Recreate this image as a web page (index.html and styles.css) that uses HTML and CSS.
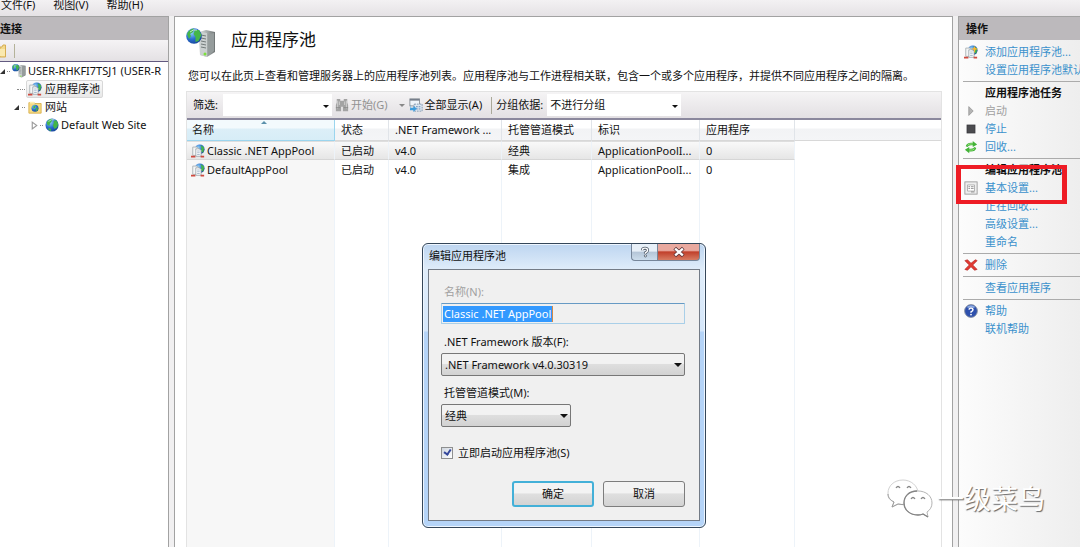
FILE: index.html
```html
<!DOCTYPE html>
<html lang="zh-CN">
<head>
<meta charset="utf-8">
<title>应用程序池</title>
<link rel="stylesheet" href="styles.css">
</head>
<body>
<svg class="defs" aria-hidden="true">
  <defs>
    <radialGradient id="sea" cx=".35" cy=".3" r=".8"><stop offset="0" stop-color="#8fd0f5"/><stop offset=".5" stop-color="#2b6fd0"/><stop offset="1" stop-color="#123f92"/></radialGradient>
    <linearGradient id="metal"><stop offset="0" stop-color="#dfe3e3"/><stop offset=".5" stop-color="#a6acac"/><stop offset="1" stop-color="#6e7474"/></linearGradient>
    <symbol id="globe" viewBox="0 0 16 16">
      <circle cx="8" cy="8" r="7.500" fill="url(#sea)"/>
      <path d="M2 4.500Q5 .8 8.500 1L7.500 4 5.500 6.500 5 9 2.500 7.500ZM10 3l3-.5 2 4-1 4-3 2-2-4 1-2.500ZM4 11l3 1.500-.5 2.500-2.500-1.500Z" fill="#45b649"/>
      <path d="M4 4Q7 1 11 2" fill="none" stroke="#d7f3ee" opacity=".8"/>
    </symbol>
    <symbol id="server" viewBox="0 0 30 30">
      <path d="M13 4l7-2 9 2v20l-8 5-7-2Z" fill="url(#metal)"/>
      <path d="M13 4l8 1v24l-7-2Z" fill="#cbd0d0"/>
      <path d="M15 7l5 1M15 10l5 1M15 13l5 1M15 16l5 1M15 19l5 1" stroke="#737b7b"/>
      <path d="M22 6l6-1v18l-6 5Z" fill="#959c9c"/>
      <circle cx="19" cy="26" r="1.500" fill="#7be03a"/>
      <circle cx="8" cy="8" r="7.800" fill="url(#sea)"/><path d="M1 6Q3 1 8 .5L7 4 4 6 5 8 3 11ZM9 2l4 0 2.500 5-3 6-3 1 0-5-2-3Z" fill="#45b649"/><path d="M4 4Q7 1 11 2" fill="none" stroke="#e3f7ef" opacity=".8"/>
    </symbol>
    <symbol id="pool" viewBox="0 0 16 16">
      <circle cx="10" cy="6" r="5.500" fill="url(#sea)"/><path d="M11 1l4 3-1 6-3-2 1-3Z" fill="#45b649"/>
      <path d="M2 3.500h5l2 2V13H2Z" fill="#f4f6f7" stroke="#a8b0b4"/>
      <path d="M5.500 5.500h4l2 2V14h-6Z" fill="#fff" stroke="#9aa5ab"/>
      <path d="M7 8h3M7 10h3M7 12h3" stroke="#9db4c8"/>
      <path d="M0 14.500h5M11 14.500h4" fill="none" stroke="#cf4a3f" stroke-width="2"/>
    </symbol>
    <symbol id="folder" viewBox="0 0 16 16">
      <path d="M1 3h6l1 1h7v11H1Z" fill="#f7dc83" stroke="#d7ae4b"/><path d="M2 2h5v2H2Z" fill="#fff0b3"/>
      <circle cx="8" cy="9.500" r="4" fill="url(#sea)"/><path d="M6 7l3-1-1 3-2 1ZM9 10l2-2v3l-2 2Z" fill="#45b649"/>
    </symbol>
  </defs>
</svg>

<nav class="menu">
  <button type="button">文件(F)</button>
  <button type="button">视图(V)</button>
  <button type="button">帮助(H)</button>
</nav>

<div class="workspace">
  <aside class="pane connections">
    <h2 class="pane-title">连接</h2>
    <div class="pane-tools"><svg class="tool-folder" viewBox="0 0 6 14"><path d="M0 3h2l1-2h2.500v12H0Z" fill="#f3d98c" stroke="#d6ad52"/><path d="M0 5h5v7H0Z" fill="#fae9ae"/></svg></div>
    <ul class="tree">
      <li><span class="open"></span><span class="dots"></span><svg class="icon" viewBox="0 0 30 30"><use href="#server"/></svg><span>USER-RHKFI7TSJ1 (USER-R</span></li>
      <li class="level-two"><span class="dots long"></span><span class="node selected"><svg class="icon"><use href="#pool"/></svg>应用程序池</span></li>
      <li class="level-one"><span class="open"></span><span class="dots"></span><svg class="icon"><use href="#folder"/></svg><span>网站</span></li>
      <li class="level-three"><svg class="closed" viewBox="0 0 6 8"><path d="M1 1l4 3-4 3Z" fill="#fff" stroke="#999"/></svg><span class="dots"></span><svg class="icon"><use href="#globe"/></svg><span>Default Web Site</span></li>
    </ul>
  </aside>

  <main class="content">
    <header class="page-head"><svg class="big-icon" viewBox="0 0 30 30"><use href="#server"/></svg><h1>应用程序池</h1></header>
    <p class="intro">您可以在此页上查看和管理服务器上的应用程序池列表。应用程序池与工作进程相关联，包含一个或多个应用程序，并提供不同应用程序之间的隔离。</p>
    <section class="list">
      <div class="toolbar">
        <label for="filter">筛选:</label>
        <span class="flat filter"><input id="filter" type="text"></span>
        <button type="button" class="find" disabled>
          <svg class="icon" viewBox="0 0 16 16"><path d="M2 1h4v2h4V1h4v4l1 3v7H9v-5H7v5H1V8l1-3Z" fill="#a3a3a3"/><path d="M3 3v9M5 4v4M11 4v4M13 3v9" stroke="#d3d3d3"/><path d="M1 11h5M10 11h5" stroke="#888"/></svg>开始(G)<span class="caret"></span>
        </button>
        <button type="button" class="show-all">
          <svg class="icon" viewBox="0 0 16 16"><rect x="1" y="1" width="11" height="8" fill="#eef4fa" stroke="#8a9097"/><path d="M1 2h11" stroke="#777f8b" stroke-width="2"/><path d="M6 7h9v8H6Z" fill="#dce8f3" stroke="#7c91aa" stroke-dasharray="2 1"/><path d="M8 10h5M8 12.500h5" stroke="#5c7fab" stroke-dasharray="2 1"/><path d="M2 7v4h3V9l4 3-4 4v-2H1Z" fill="#3c9bdc"/></svg>全部显示(A)
        </button>
        <span class="divider"></span>
        <label for="group">分组依据:</label>
        <span class="flat group"><select id="group"><option>不进行分组</option></select></span>
      </div>
      <table>
        <colgroup><col class="c-name"><col class="c-state"><col class="c-net"><col class="c-mode"><col class="c-id"><col class="c-app"><col></colgroup>
        <thead><tr><th class="sorted">名称</th><th>状态</th><th>.NET Framework ...</th><th>托管管道模式</th><th>标识</th><th>应用程序</th><th></th></tr></thead>
        <tbody>
          <tr class="picked"><td><span class="cell"><svg class="icon"><use href="#pool"/></svg>Classic .NET AppPool</span></td><td>已启动</td><td>v4.0</td><td>经典</td><td>ApplicationPoolI...</td><td>0</td><td></td></tr>
          <tr><td><span class="cell"><svg class="icon"><use href="#pool"/></svg>DefaultAppPool</span></td><td>已启动</td><td>v4.0</td><td>集成</td><td>ApplicationPoolI...</td><td>0</td><td></td></tr>
          <tr class="filler"><td></td><td></td><td></td><td></td><td></td><td></td><td></td></tr>
        </tbody>
      </table>
    </section>
  </main>

  <aside class="pane actions">
    <h2 class="pane-title">操作</h2>
    <div class="group-box">
      <div class="action"><svg class="icon" viewBox="0 0 16 16"><use href="#pool"/><path d="M12 1l1 2.500 3 1-3 1L12 9l-1-3.500-3-1 3-1Z" fill="#ffb52e"/></svg><a href="#">添加应用程序池...</a></div>
      <div class="action"><a href="#">设置应用程序池默认</a></div>
    </div>
    <div class="group-box">
      <h3>应用程序池任务</h3>
      <div class="action"><svg class="icon" viewBox="0 0 16 16"><path d="M5.500 3v10l5-5Z" fill="#b5b5b5" stroke="#999"/></svg><span class="off">启动</span></div>
      <div class="action"><svg class="icon" viewBox="0 0 16 16"><rect x="3.500" y="3.500" width="9" height="9" fill="#4b4b4f" stroke="#343438"/></svg><a href="#">停止</a></div>
      <div class="action"><svg class="icon" viewBox="0 0 16 16"><path d="M2 7q1-4 6-4h2V1l5 4-5 3V6H8Q5 6 4 8ZM14 9q-1 4-6 4H6v2l-5-4 5-3v2h2q3 0 4-2Z" fill="#43b338"/><path d="M4 6q1-2 6-1.500M12 10q-1 2-6 1.500" fill="none" stroke="#a5e889"/></svg><a href="#">回收...</a></div>
    </div>
    <div class="group-box">
      <h3>编辑应用程序池</h3>
      <div class="action"><svg class="icon" viewBox="0 0 16 16"><rect x="1" y="1" width="14" height="14" fill="#eee" stroke="#999"/><path d="M4 4.500h8v7H4Z" fill="#fff" stroke="#aaa"/><path d="M5 6.500h2M8 6.500h3M5 8.500h2M8 8.500h3M8 12.500h4" stroke="#888"/></svg><a href="#">基本设置...</a></div>
      <div class="action"><a href="#">正在回收...</a></div>
      <div class="action"><a href="#">高级设置...</a></div>
      <div class="action"><a href="#">重命名</a></div>
    </div>
    <div class="group-box">
      <div class="action"><svg class="icon" viewBox="0 0 16 16"><path d="M1 3l3-1 4 4L13 2l2 1-5 5L15 13l-3 1-4-4-4 4-3-1 5-5Z" fill="#e23a32" stroke="#ad1d1b" stroke-width=".7"/></svg><a href="#">删除</a></div>
    </div>
    <div class="group-box"><div class="action"><a href="#">查看应用程序</a></div></div>
    <div class="group-box">
      <div class="action"><svg class="icon" viewBox="0 0 16 16"><circle cx="8" cy="8" r="7.300" fill="#2e50ad" stroke="#87909f"/><path d="M4 4Q8 1 12 4" fill="none" stroke="#8caae3" stroke-width="2"/><path d="M5.700 6.500Q6 4.500 8 4.500t2.300 1.800Q10.300 8 8 9v1" fill="none" stroke="#fff" stroke-width="1.700"/><circle cx="8" cy="12" r="1" fill="#fff"/></svg><a href="#">帮助</a></div>
      <div class="action"><a href="#">联机帮助</a></div>
    </div>
  </aside>
</div>

<div class="highlight"></div>

<form class="dialog" role="dialog" aria-labelledby="dialog-title">
  <div class="dialog-bar">
    <h2 id="dialog-title">编辑应用程序池</h2>
    <div class="window-buttons">
      <button type="button" class="help" aria-label="帮助"><svg viewBox="0 0 14 14"><path d="M4 5Q4 2.500 7 2.500T10 5Q10 6.500 7.500 8v1" fill="none" stroke="#4d5967" stroke-width="3.500"/><path d="M4 5Q4 2.500 7 2.500T10 5Q10 6.500 7.500 8v1" fill="none" stroke="#fff" stroke-width="1.700"/><circle cx="7.500" cy="11.500" r="1.300" fill="#fff" stroke="#4d5967"/></svg></button>
      <button type="button" class="close" aria-label="关闭"><svg viewBox="0 0 14 14"><path d="M2 2.500l10 9M12 2.500l-10 9" stroke="#5c3438" stroke-width="4.500"/><path d="M2.500 3l9 8M11.500 3l-9 8" stroke="#fff" stroke-width="2.700"/></svg></button>
    </div>
  </div>
  <div class="dialog-body">
    <label class="muted" for="pool-name">名称(N):</label>
    <div class="name-box"><input id="pool-name" type="text" size="16" value="Classic .NET AppPool" readonly></div>
    <label for="version">.NET Framework 版本(F):</label>
    <span class="drop"><select id="version"><option>.NET Framework v4.0.30319</option></select></span>
    <label for="mode">托管管道模式(M):</label>
    <span class="drop short"><select id="mode"><option>经典</option></select></span>
    <label class="check"><input type="checkbox" checked>立即启动应用程序池(S)</label>
    <div class="buttons"><button type="submit" class="primary">确定</button><button type="button">取消</button></div>
  </div>
</form>

<div class="watermark">
  <svg viewBox="0 0 46 40"><path d="M16 1C7 1 1 7 1 14c0 4 2 7 6 9l-2 5 6-3q5 1.500 10 0C28 23 31 19 31 14 31 7 24 1 16 1Z" fill="#fff" stroke="#d2d2d2"/><path d="M1 15c0 4 2 6 6 8l-2 5 6-3q4 1 8 0" fill="none" stroke="#9a9a9a"/><path d="M31 12c-8 0-14 5-14 12s6 12 14 12q3 0 5-1l5 3-1-5c3-2 5-5 5-9 0-7-6-12-14-12Z" fill="#fff" stroke="#b4b4b4"/><path d="M30 12c-8 0-13 5-13 12s6 12 14 12q3 0 5-1l5 3" fill="none" stroke="#848484" stroke-width="1.300"/><path d="M9 9q2-3 4 0M20 9q2-3 4 0M24 20q2-3 4 0M34 20q2-3 4 0" fill="none" stroke="#888" stroke-width="1.300"/></svg>
  <span>一级菜鸟</span>
</div>
</body>
</html>
```

FILE: styles.css
```css
* { box-sizing: border-box; }
html, body { height: 100%; }
body {
  margin: 0;
  display: flex;
  flex-direction: column;
  position: relative;
  overflow: hidden;
  background: #f1f0f1;
  color: #111;
  font: 11px/18px "Noto Sans", "Noto Sans CJK SC", sans-serif;
}
button, input, select { font: inherit; color: inherit; margin: 0; }
h1, h2, h3, p, ul { margin: 0; padding: 0; font-weight: normal; font-size: 11px; }
.defs { position: absolute; width: 0; height: 0; }
.icon { width: 14px; height: 14px; flex: none; }

.menu {
  flex: none;
  display: flex;
  align-items: flex-end;
  gap: 18px;
  height: 16px;
  padding: 0 1px 1px;
  background: linear-gradient(#f3f1f3, #e5e2e5);
}
.menu button { border: 0; padding: 0; background: none; height: 21px; flex: none; }

.workspace { flex: 1; min-height: 0; display: flex; gap: 5px; }
.pane { flex: none; border: 1px solid #a2a2a2; border-bottom: 0; overflow: hidden; }
.pane-title {
  height: 23px;
  line-height: 24px;
  font-weight: bold;
  background: #bcb9bc;
}
.connections { width: 169px; border-left: 0; background: #fff; }
.pane-tools {
  display: flex;
  align-items: center;
  gap: 8px;
  height: 22px;
  border-bottom: 1px solid #625a80;
  background: linear-gradient(#f5f3f5, #e4e1e4);
}
.pane-tools::after { content: ""; width: 1px; height: 14px; background: #b4b299; }
.tool-folder { width: 6px; height: 14px; }
.tree { list-style: none; white-space: nowrap; }
.tree li { display: flex; align-items: center; gap: 2px; height: 18px; }
.level-one { padding-left: 14px; }
.level-two { padding-left: 17px; }
.level-three { padding-left: 31px; }
.open { border-left: 5px solid transparent; border-bottom: 5px solid #333; }
.closed { width: 7px; height: 9px; }
.dots { width: 3px; border-top: 1px dotted #888; }
.long { width: 8px; }
.tree .level-two { gap: 1px; }
.tree .level-one { gap: 3px; }
.node { display: flex; align-items: center; gap: 3px; height: 18px; padding: 0 2px 0 1px; }
.selected { border: 1px solid #d8d8d8; border-radius: 2px; background: linear-gradient(#fafafa, #e8e8e8); }

.content {
  flex: 1;
  min-width: 0;
  display: flex;
  flex-direction: column;
  padding: 10px 10px 0 11px;
  border: 1px solid #a2a2a2;
  border-bottom: 0;
  background: #fff;
}
.page-head { display: flex; align-items: center; gap: 15px; height: 32px; }
.page-head h1 { font-size: 17px; line-height: 26px; padding-bottom: 6px; }
.big-icon { width: 30px; height: 30px; }
.intro { padding: 8px 2px; height: 32px; white-space: nowrap; }
.list {
  flex: 1;
  min-height: 0;
  display: flex;
  flex-direction: column;
  border: 1px solid #e3e3e3;
  border-bottom: 0;
}
.toolbar {
  flex: none;
  display: flex;
  align-items: center;
  height: 28px;
  padding-left: 6px;
  border-bottom: 2px solid #8b889d;
  background: linear-gradient(#f5f4f5, #e3e0e3);
  white-space: nowrap;
}
.toolbar button { display: flex; align-items: center; gap: 2px; border: 0; padding: 0; background: none; }
.toolbar .find { color: #929292; }
.caret { margin: 0 4px 0 9px; border: 3px solid transparent; border-top-color: #888; border-bottom: 0; }
.divider { width: 1px; height: 17px; margin: 0 4px 0 9px; background: #aaa99a; }
.flat, .drop { position: relative; display: block; }
.flat::after, .drop::after {
  content: "";
  position: absolute;
  right: 3px;
  top: 50%;
  border: 3px solid transparent;
  border-top-color: #111;
  border-bottom: 0;
  pointer-events: none;
}
.flat input, .flat select {
  appearance: none;
  display: block;
  width: 100%;
  height: 22px;
  padding: 0 3px;
  border: 0;
  border-radius: 0;
  background: #fff;
}
.filter { width: 109px; margin: 0 3px 0 5px; }
.group { width: 134px; margin-left: 4px; }

table { flex: 1; width: 100%; table-layout: fixed; border-collapse: separate; border-spacing: 0; }
.c-name { width: 148px; }
.c-state { width: 54px; }
.c-net { width: 113px; }
.c-mode { width: 90px; }
.c-id { width: 108px; }
.c-app { width: 95px; }
th, td {
  padding: 0 0 0 6px;
  text-align: left;
  font-weight: normal;
  white-space: nowrap;
  border-right: 1px solid #edf3f9;
}
th:last-child, td:last-child { border-right: 0; }
th { height: 21px; border-bottom: 1px solid #d8d8d8; border-right-color: #e0e4e9; background: linear-gradient(#fff 40%, #f2f3f5 45%, #f4f5f7); }
.sorted { position: relative; padding-left: 5px; border-color: #9bd5ee; background: linear-gradient(#f3fafd 40%, #dceff8 45%, #d7edf7); }
.sorted::after { content: ""; position: absolute; left: 50%; top: 1px; border: 3px solid transparent; border-bottom-color: #5b91ac; border-top: 0; }
td { height: 19px; line-height: 17px; }
td:first-child { padding-left: 4px; background: #f7f7f7; }
.filler td { height: auto; }
.cell { display: flex; align-items: center; gap: 2px; }
.picked td { border-top: 1px solid #dedede; border-bottom: 1px solid #d6d6d6; }
.picked td, .picked td:first-child { background: linear-gradient(#f9f9f9, #e6e6e6); }
.picked td:last-child { border: 0; background: none; }

.actions { width: 122px; border-right: 0; background: linear-gradient(90deg, #fcfcfc, #eee); white-space: nowrap; }
.actions .pane-title { padding-left: 7px; margin-bottom: 3px; }
.group-box { padding-left: 26px; }
.group-box + .group-box::before { content: ""; display: block; height: 1px; margin: 2px 0 2px -22px; background: #ababab; }
.group-box h3 { font-weight: bold; line-height: 18px; }
.action { display: flex; align-items: center; height: 18px; }
.action .icon { margin: 0 7px 0 -21px; }
.action a { color: #3a91cc; text-decoration: none; }
.off { color: #a0a0a0; }

.highlight { position: absolute; left: 956px; top: 165px; width: 111px; height: 39px; border: solid #ee1c25; border-width: 4px 5px; pointer-events: none; }

.dialog {
  position: absolute;
  left: 422px;
  top: 243px;
  width: 284px;
  padding: 0 5px 6px;
  border: 1px solid #35475a;
  border-radius: 6px;
  background: linear-gradient(#bdd5f0, #e0edfa 26px, #d5e7fb 87px, #b5d4f8 88px, #b5d4f8);
  box-shadow: inset 0 0 0 1px #eef6ff;
}
.dialog-bar { display: flex; justify-content: space-between; height: 25px; }
.dialog-bar h2 { line-height: 24px; padding-left: 1px; }
.window-buttons { display: flex; height: 17px; }
.window-buttons button { display: flex; align-items: center; justify-content: center; padding: 0; border: 1px solid #76869a; border-top: 0; }
.window-buttons svg { width: 12px; height: 12px; }
.window-buttons .help { width: 26px; border-right: 0; border-radius: 0 0 0 4px; background: linear-gradient(#e8f0f8 45%, #b4c5d7 50%, #ccddec); }
.close { width: 43px; border-radius: 0 0 4px 0; background: linear-gradient(#e9a99f 40%, #c1402b 50%, #d77c62); }
.dialog-body { display: flex; flex-direction: column; padding: 12px 14px 13px 12px; border: 1px solid #737b86; background: #f0f0f0; }
.dialog-body > label { padding-left: 3px; height: 21px; line-height: 20px; }
.dialog-body > .muted { color: #a0a0a0; }
.name-box { display: flex; align-items: center; height: 21px; margin-bottom: 8px; padding: 0 1px; border: 1px solid #a9cfe8; border-top-color: #669ac4; border-radius: 1px; }
.name-box input { field-sizing: content; height: 16px; padding: 0 1px; border: 0; border-right: 1px solid #d68a48; background: #3399ff; color: #fff; outline: 0; }
.drop { margin-bottom: 7px; }
.drop select { appearance: none; display: block; width: 100%; height: 23px; padding: 0 3px; border: 1px solid #777; border-radius: 2px; background: linear-gradient(#f2f2f2 45%, #dedede 50%, #d2d2d2); }
.drop::after { border-width: 4px; border-bottom: 0; margin-top: -2px; }
.short { width: 130px; margin-bottom: 15px; }
.dialog-body > .check { display: flex; align-items: center; gap: 5px; padding: 0; }
.check input { appearance: none; display: flex; align-items: center; justify-content: center; width: 12px; height: 12px; border: 1px solid #8e8f8f; background: linear-gradient(135deg, #cfd6df, #fff); }
.check input:checked::after { content: ""; box-sizing: content-box; flex: none; width: 3px; height: 5px; margin-bottom: 2px; border: solid #34479b; border-width: 0 2px 2px 0; transform: rotate(35deg); }
.buttons { display: flex; justify-content: flex-end; gap: 9px; margin-top: 18px; }
.buttons button { width: 82px; height: 26px; padding: 0; border: 1px solid #7d7d7d; border-radius: 3px; background: linear-gradient(#f3f3f3 45%, #dfdfdf 50%, #d3d3d3); }
.buttons .primary { border: 2px solid #43b0d8; }

.watermark { position: absolute; right: 35px; bottom: 28px; display: flex; align-items: center; gap: 4px; }
.watermark svg { width: 46px; height: 40px; }
.watermark span { color: #fff; font-size: 27px; line-height: 40px; text-shadow: 1px 1px 1px #666; }
```
